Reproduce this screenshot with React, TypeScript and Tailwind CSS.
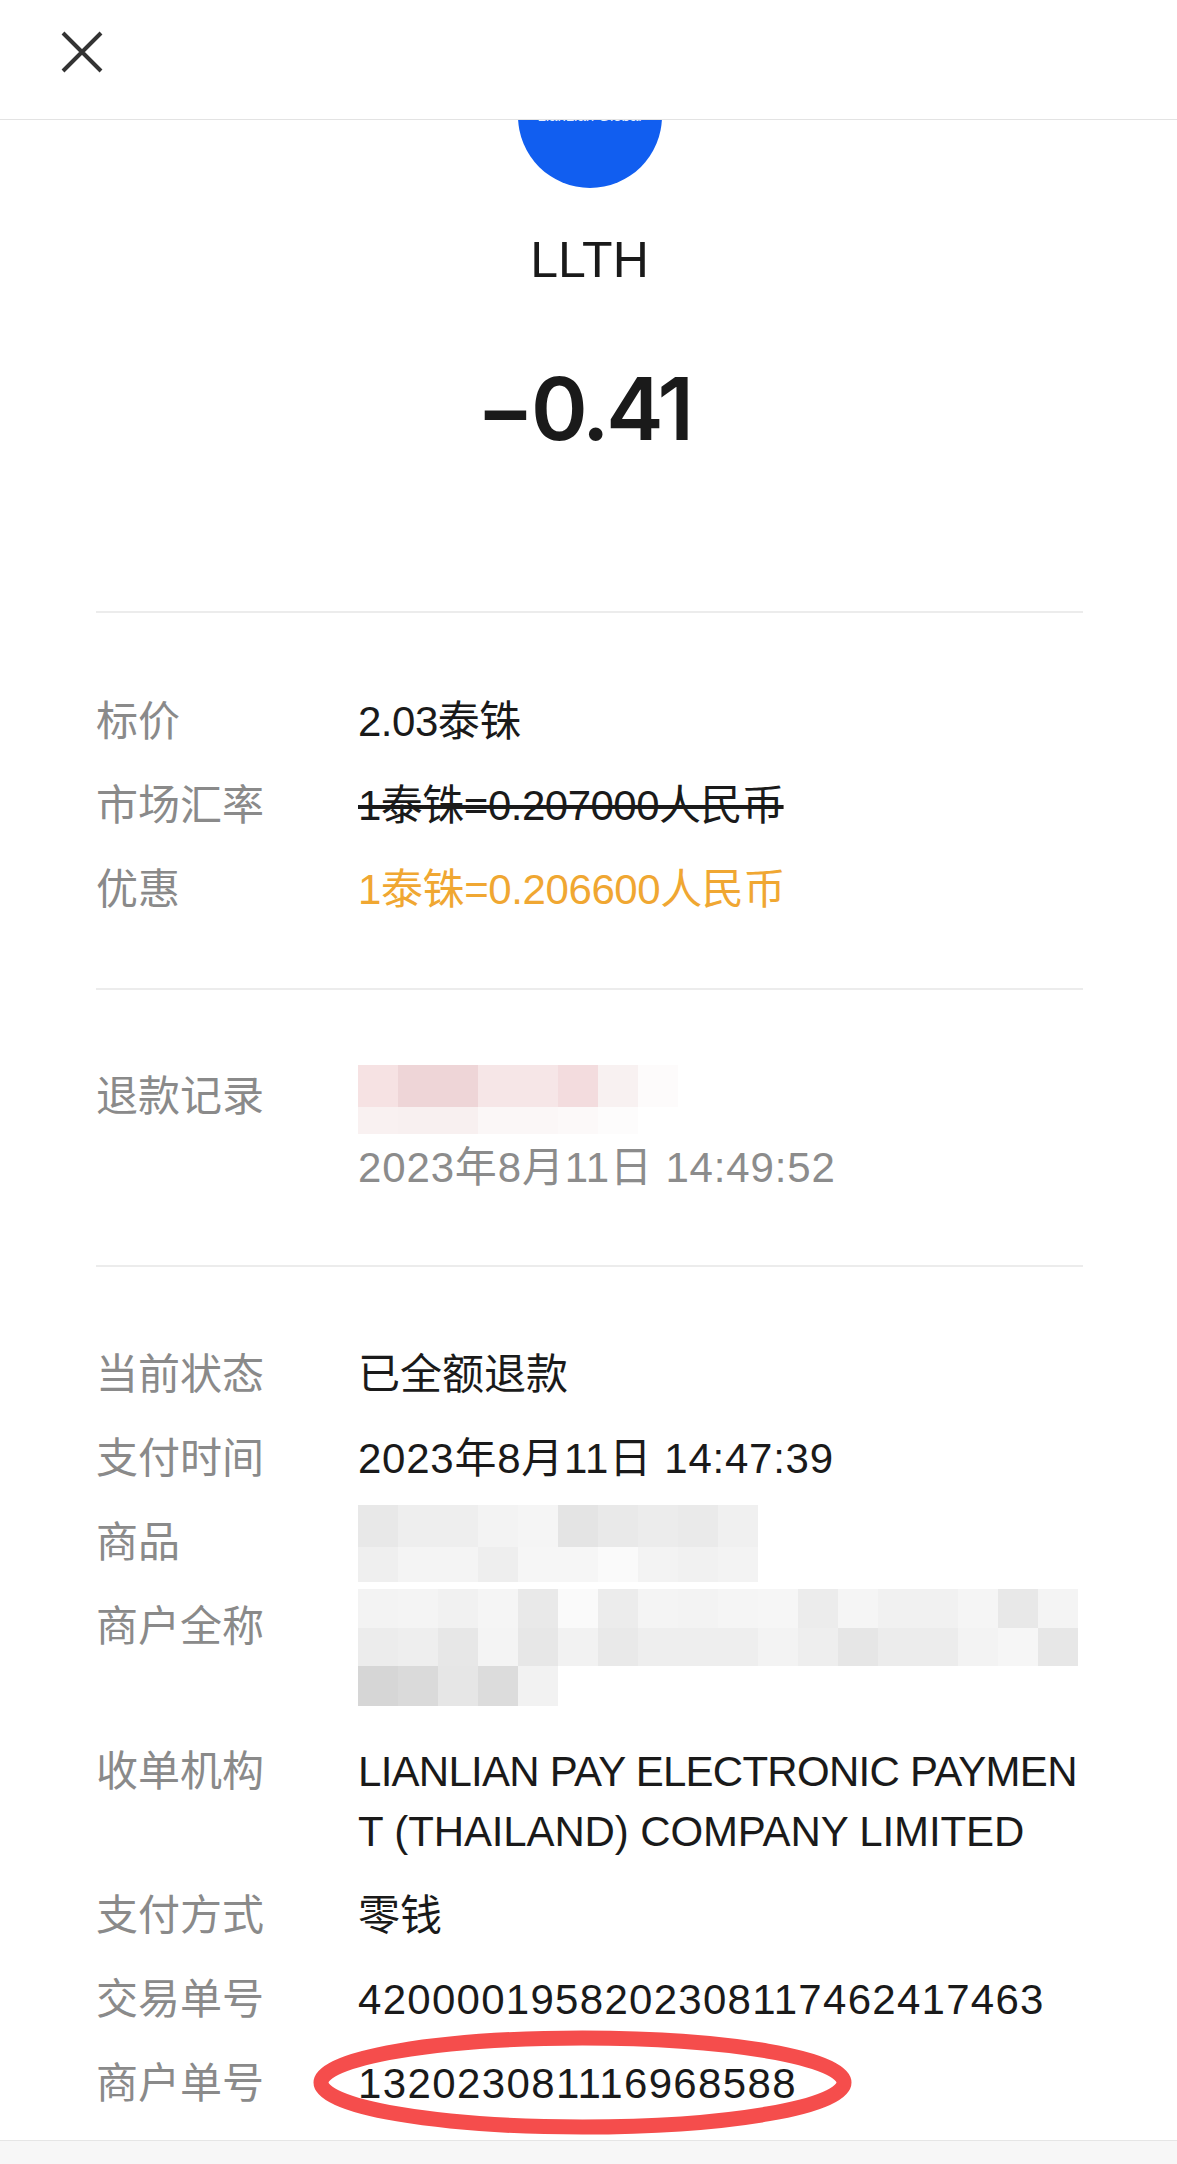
const goodsRows = [
  ["#e8e8e8", "#eeeeee", "#eeeeee", "#f3f3f3", "#f5f5f5", "#e4e4e4", "#e9e9e9", "#ececec", "#eaeaea", "#f0f0f0"],
  ["#efefef", "#f4f4f4", "#f4f4f4", "#eeeeee", "#f6f6f6", "#f6f6f6", "#fafafa", "#f3f3f3", "#f1f1f1", "#f3f3f3"],
];

const merchantRows = [
  ["#f3f3f3", "#f4f4f4", "#f1f1f1", "#f5f5f5", "#e9e9e9", "#fafafa", "#ececec", "#f4f4f4", "#f3f3f3", "#f5f5f5", "#f6f6f6", "#ececec", "#f5f5f5", "#f1f1f1", "#f1f1f1", "#f5f5f5", "#e8e8e8", "#f4f4f4"],
  ["#ececec", "#eeeeee", "#e7e7e7", "#f4f4f4", "#e7e7e7", "#f2f2f2", "#e9e9e9", "#eeeeee", "#eeeeee", "#eeeeee", "#f3f3f3", "#eeeeee", "#e6e6e6", "#ececec", "#ececec", "#f3f3f3", "#f6f6f6", "#e7e7e7"],
  ["#d6d6d6", "#dadada", "#e6e6e6", "#dcdcdc", "#f2f2f2"],
];

const refundRows = [
  ["#f6e2e3", "#eed5d7", "#eed5d7", "#f6e6e7", "#f6e6e7", "#f3dcde", "#f8f1f1", "#fdfbfb"],
  ["#f9f1f1", "#f8f0f0", "#f8f0f0", "#fbf7f7", "#fbf7f7", "#fcf9f9", "#fdfcfc", "#ffffff"],
];

function Mosaic({ rows, rowHeights }: { rows: string[][]; rowHeights: string[] }) {
  return (
    <div className="flex flex-col">
      {rows.map((row, i) => (
        <div key={i} className={`flex ${rowHeights[i]}`}>
          {row.map((color, j) => (
            <div key={j} className="w-10 h-full" style={{ backgroundColor: color }} />
          ))}
        </div>
      ))}
    </div>
  );
}

function Row({ label, children, className = "" }: { label: string; children: React.ReactNode; className?: string }) {
  return (
    <div className={`flex ${className}`}>
      <div className="w-[262px] shrink-0 text-[#8a8a8a]">{label}</div>
      <div className="relative min-w-0 flex-1 text-[#1a1a1a]">{children}</div>
    </div>
  );
}

function Divider() {
  return <div className="h-0.5 bg-[#ececec]" />;
}

export default function App() {
  return (
    <div className="flex h-[2164px] w-[1177px] flex-col overflow-hidden bg-white font-['Liberation_Sans','Noto_Sans_CJK_SC',sans-serif] text-[42px] leading-[60px]">
      <header className="relative z-10 flex h-[120px] shrink-0 items-start border-b border-[#e3e3e3] bg-white pl-[60px] pt-[30px]">
        <svg width="44" height="44" viewBox="0 0 44 44" fill="none" stroke="#333333" strokeWidth="4">
          <path d="M3 3L41 41M41 3L3 41" />
        </svg>
      </header>

      <main className="flex-1 overflow-hidden">
        <div className="flex flex-col items-center pl-0.5">
          <div className="-mt-[76px] flex h-[144px] w-[144px] items-center justify-center rounded-full bg-[#115ef0]">
            <span className="text-[15px] font-light leading-5 text-[#e8f0ff]">LianLian Global</span>
          </div>
          <div className="mt-[42px] text-[50px] leading-[60px] text-[#1a1a1a]">LLTH</div>
          <div className="mr-3 mt-[69px] font-['Inter',sans-serif] text-[86px] font-semibold leading-[100px] tracking-[-3.3px] text-[#1a1a1a]">−0.41</div>
        </div>

        <div className="mt-[152px] pl-24 pr-[94px]">
          <Divider />

          <div className="flex flex-col gap-6 pb-[68px] pt-[79px]">
            <Row label="标价">
              <span className="tracking-[-0.5px]">2.03泰铢</span>
            </Row>
            <Row label="市场汇率">
              <span className="tracking-[-0.5px] line-through">1泰铢=0.207000人民币</span>
            </Row>
            <Row label="优惠">
              <span className="tracking-[-0.4px] text-[#f0a732]">1泰铢=0.206600人民币</span>
            </Row>
          </div>

          <Divider />

          <div className="pb-[67px] pt-[77px]">
            <Row label="退款记录">
              <div className="-mt-0.5">
                <Mosaic rows={refundRows} rowHeights={["h-[42px]", "h-[27px]"]} />
              </div>
              <div className="mt-1 tracking-[0.85px] text-[#8c8c8c]">2023年8月11日 14:49:52</div>
            </Row>
          </div>

          <Divider />

          <div className="flex flex-col gap-6 pt-[78px]">
            <Row label="当前状态">已全额退款</Row>
            <Row label="支付时间">
              <span className="tracking-[0.75px]">2023年8月11日 14:47:39</span>
            </Row>
            <Row label="商品" className="h-[60px]">
              <div className="-mt-2">
                <Mosaic rows={goodsRows} rowHeights={["h-[42px]", "h-[35px]"]} />
              </div>
            </Row>
            <Row label="商户全称" className="h-[121px]">
              <div className="-mt-2">
                <Mosaic rows={merchantRows} rowHeights={["h-[39px]", "h-[38px]", "h-10"]} />
              </div>
            </Row>
            <Row label="收单机构">
              <div className="break-all">
                <span className="tracking-[-0.73px]">LIANLIAN PAY ELECTRONIC PAYMEN</span>
                <span className="tracking-[-0.13px]">T (THAILAND) COMPANY LIMITED</span>
              </div>
            </Row>
            <Row label="支付方式">零钱</Row>
            <Row label="交易单号">
              <span className="tracking-[1.28px]">4200001958202308117462417463</span>
            </Row>
            <Row label="商户单号">
              <svg
                className="absolute -left-[45px] -top-[24px]"
                width="539"
                height="105"
                viewBox="0 0 539 105"
                fill="none"
              >
                <ellipse cx="269.5" cy="52.5" rx="261.5" ry="44.5" stroke="#f54d4c" strokeWidth="15" />
              </svg>
              <span className="relative tracking-[1.38px]">132023081116968588</span>
            </Row>
          </div>
        </div>
      </main>

      <footer className="h-6 shrink-0 border-t border-[#e6e6e6] bg-[#f7f7f7]" />
    </div>
  );
}
